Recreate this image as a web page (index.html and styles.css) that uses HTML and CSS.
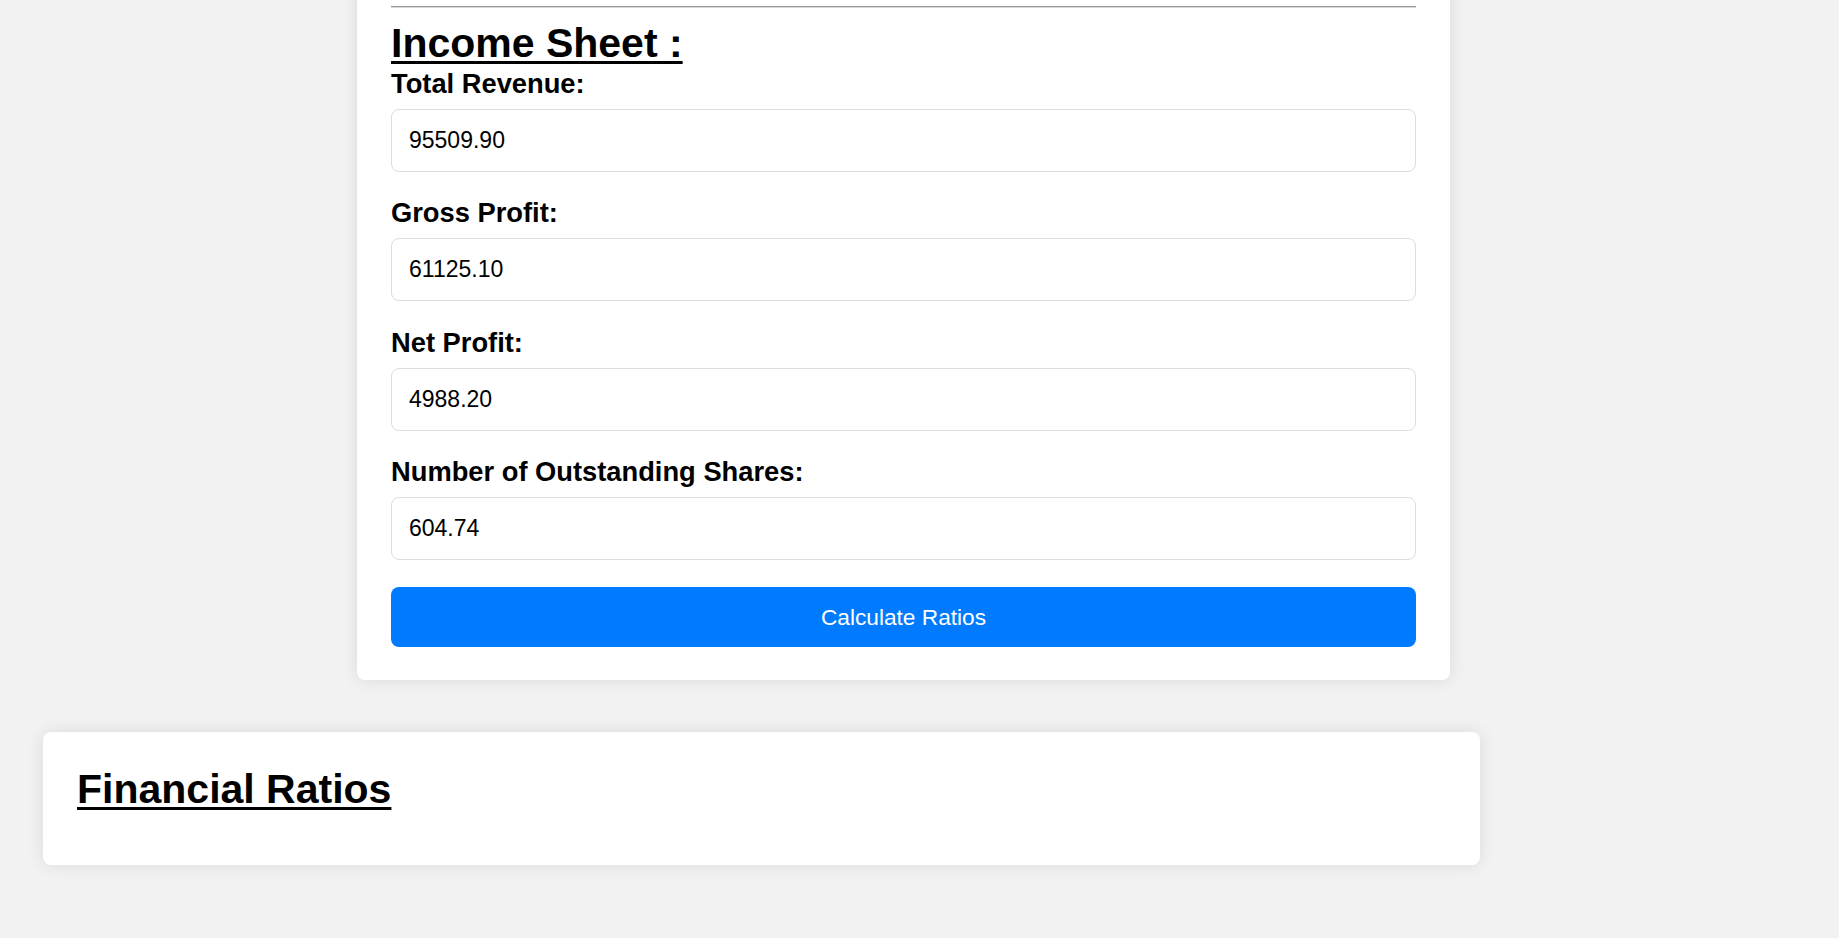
FILE: index.html
```html
<!DOCTYPE html>
<html lang="en">
<head>
<meta charset="utf-8">
<title>Financial Ratios</title>
<link rel="stylesheet" href="styles.css">
</head>
<body>
<div class="page">
  <form class="form-card">
    <hr class="divider">
    <h2 class="section-title">Income Sheet :</h2>
    <div class="field">
      <label class="field-label" for="rev">Total Revenue:</label>
      <input class="field-input" id="rev" type="text" value="95509.90">
    </div>
    <div class="field">
      <label class="field-label" for="gp">Gross Profit:</label>
      <input class="field-input" id="gp" type="text" value="61125.10">
    </div>
    <div class="field">
      <label class="field-label" for="np">Net Profit:</label>
      <input class="field-input" id="np" type="text" value="4988.20">
    </div>
    <div class="field">
      <label class="field-label" for="sh">Number of Outstanding Shares:</label>
      <input class="field-input" id="sh" type="text" value="604.74">
    </div>
    <button class="calc-btn" type="button">Calculate Ratios</button>
  </form>
  <section class="results-card">
    <h2 class="section-title results-title">Financial Ratios</h2>
  </section>
</div>
</body>
</html>
```

FILE: styles.css
```css
html, body {
  margin: 0;
  padding: 0;
}
body {
  background: #f2f2f2;
  font-family: "Liberation Sans", Arial, sans-serif;
  color: #000;
  height: 938px;
  overflow: hidden;
}
.page {
  width: 1437px;
  margin-left: 43px;
}
.form-card {
  box-sizing: border-box;
  width: 1093px;
  margin-left: 314px;
  margin-top: -30px;
  padding: 29px 34px 33px;
  background: #fff;
  border-radius: 8px;
  box-shadow: 0 0 17px rgba(0, 0, 0, 0.1);
  display: flex;
  flex-direction: column;
}
.divider {
  margin: 7px 0 12px;
  border: 0;
  border-top: 1px solid #999;
  border-bottom: 1px solid #d8d8d8;
  height: 0;
}
.section-title {
  margin: 0;
  font-size: 41px;
  font-weight: bold;
  text-decoration: underline;
  text-decoration-thickness: 3px;
  text-underline-offset: 4px;
  line-height: 47px;
}
.field {
  display: flex;
  flex-direction: column;
  margin-top: 1px;
  margin-bottom: 24.4px;
}
.field-label {
  font-size: 27.3px;
  font-weight: bold;
  line-height: 31px;
  margin-bottom: 10px;
}
.field-input {
  box-sizing: border-box;
  height: 63px;
  padding: 0 17px;
  border: 1.5px solid #ddd;
  border-radius: 8px;
  font-family: "Liberation Sans", Arial, sans-serif;
  font-size: 23px;
  color: #000;
  background: #fff;
  outline: none;
}
.calc-btn {
  margin-top: 2.3px;
  height: 60.5px;
  border: 0;
  border-radius: 8px;
  background: #007bff;
  color: #fff;
  font-family: "Liberation Sans", Arial, sans-serif;
  font-size: 22.7px;
  cursor: pointer;
}
.results-card {
  box-sizing: border-box;
  margin-top: 52px;
  height: 133px;
  padding: 34px 34px;
  background: #fff;
  border-radius: 8px;
  box-shadow: 0 0 17px rgba(0, 0, 0, 0.1);
}
```
